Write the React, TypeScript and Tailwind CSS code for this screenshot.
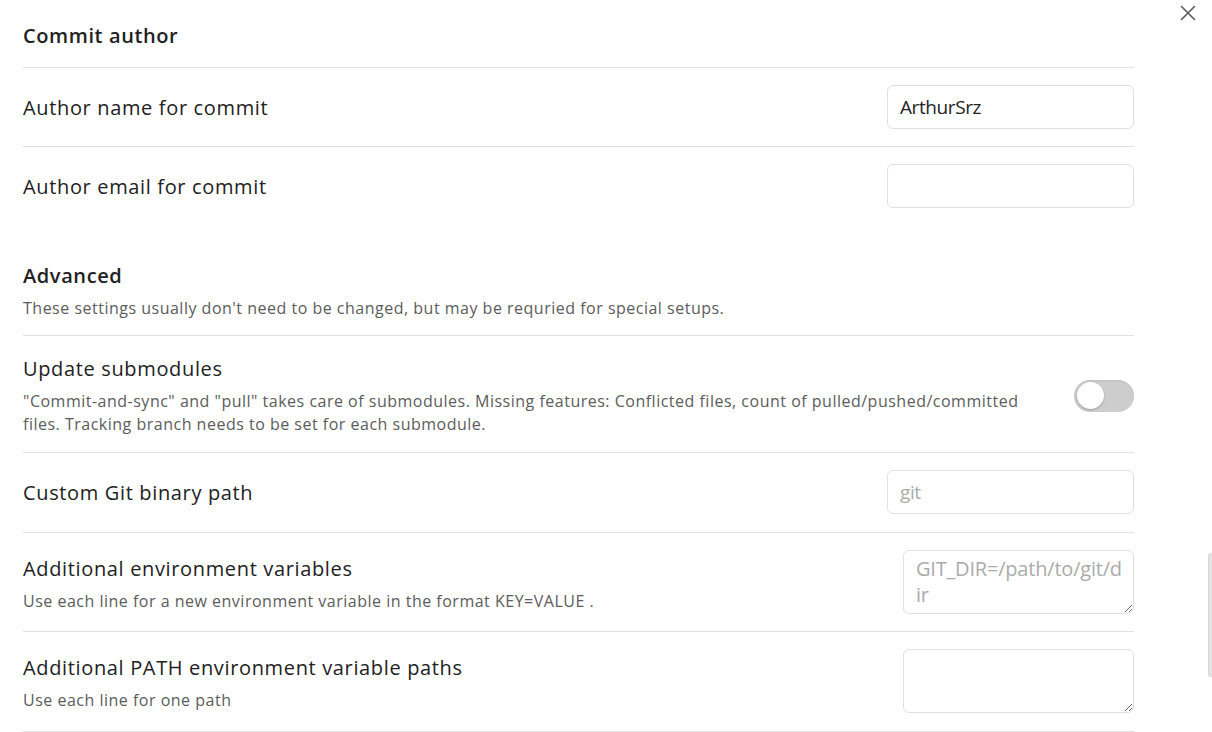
const font = { fontFamily: '"Open Sans", "Noto Sans", sans-serif' };

function Info({ name, desc, shift }: { name: string; desc?: React.ReactNode; shift?: boolean }) {
  let cls = "flex-1 min-w-0 mr-[21px]";
  if (shift) cls += " mt-[4px]";
  else if (!desc) cls += " mt-[1px]";
  return (
    <div className={cls}>
      <div className="text-[20px] leading-[28px] tracking-[0.65px] text-[#222222]">{name}</div>
      {desc && <div className="mt-[7px] text-[16px] leading-[23px] tracking-[0.5px] text-[#5c5c5c]">{desc}</div>}
    </div>
  );
}

function TextInput({ value, placeholder }: { value?: string; placeholder?: string }) {
  return (
    <input
      type="text"
      defaultValue={value}
      placeholder={placeholder}
      className="w-[247px] h-[44px] px-[12px] border border-[#e0e0e0] rounded-[6px] text-[19px] tracking-[-0.4px] text-[#222222] placeholder:text-[#ababab] outline-none bg-white"
    />
  );
}

function TextArea({ placeholder }: { placeholder?: string }) {
  return (
    <textarea
      placeholder={placeholder}
      className="block w-[231px] h-[64px] pl-[12px] pr-[4px] py-[5px] border border-[#e0e0e0] rounded-[6px] text-[20px] leading-[26px] tracking-[-0.2px] text-[#222222] placeholder:text-[#ababab] outline-none bg-white resize-y"
    />
  );
}

function Toggle() {
  return (
    <div className="w-[60px] h-[32px] rounded-full bg-[#cdcdcd] p-[3px] flex items-center shadow-[inset_0_1px_2px_rgba(0,0,0,0.08)]">
      <div className="w-[27px] h-[27px] rounded-full bg-white shadow-[0_1px_2px_rgba(0,0,0,0.25)]" />
    </div>
  );
}

export default function App() {
  return (
    <div className="relative w-[1212px] h-[732px] overflow-hidden bg-white" style={font}>
      <div className="pl-[23px] pr-[78px]">
        {/* Commit author */}
        <div className="pt-[22px] pb-[17px]">
          <div className="text-[20px] leading-[28px] font-semibold tracking-[0.6px] text-[#222222]">Commit author</div>
        </div>

        <div className="flex items-center border-t border-[#e0e0e0] py-[17px]">
          <Info name="Author name for commit" />
          <TextInput value="ArthurSrz" />
        </div>

        <div className="flex items-center border-t border-[#e0e0e0] py-[17px]">
          <Info name="Author email for commit" />
          <TextInput />
        </div>

        {/* Advanced */}
        <div className="pt-[37px] pb-[15px]">
          <div className="text-[20px] leading-[28px] font-semibold tracking-[0.6px] text-[#222222]">Advanced</div>
          <div className="mt-[7px] text-[16px] leading-[23px] tracking-[0.5px] text-[#5c5c5c]">
            These settings usually don't need to be changed, but may be requried for special setups.
          </div>
        </div>

        <div className="flex items-center border-t border-[#e0e0e0] pt-[19px] pb-[16px]">
          <Info
            name="Update submodules"
            desc={
              <>
                "Commit-and-sync" and "pull" takes care of submodules. Missing features: Conflicted files, count of pulled/pushed/committed
                <br />
                files. Tracking branch needs to be set for each submodule.
              </>
            }
          />
          <Toggle />
        </div>

        <div className="flex items-center border-t border-[#e0e0e0] pt-[17px] pb-[18px]">
          <Info name="Custom Git binary path" />
          <TextInput placeholder="git" />
        </div>

        <div className="flex items-center border-t border-[#e0e0e0] py-[17px]">
          <Info shift name="Additional environment variables" desc="Use each line for a new environment variable in the format KEY=VALUE ." />
          <TextArea placeholder={"GIT_DIR=/path/to/git/d\nir"} />
        </div>

        <div className="flex items-center border-t border-b border-[#e0e0e0] pt-[17px] pb-[18px]">
          <Info shift name="Additional PATH environment variable paths" desc="Use each line for one path" />
          <TextArea />
        </div>
      </div>

      {/* close button */}
      <button className="absolute top-[5px] right-[16px] w-[16px] h-[16px] text-[#5c5c5c]">
        <svg viewBox="0 0 16 16" width="16" height="16" fill="none" stroke="currentColor" strokeWidth="1.6" strokeLinecap="round">
          <path d="M1.5 1.5l13 13M14.5 1.5l-13 13" />
        </svg>
      </button>

      {/* scrollbar thumb */}
      <div className="absolute top-[553px] right-0 w-[4px] h-[124px] rounded-l-[3px] bg-[#e3e3e3] border-l border-[#d8d8d8]" />
    </div>
  );
}
